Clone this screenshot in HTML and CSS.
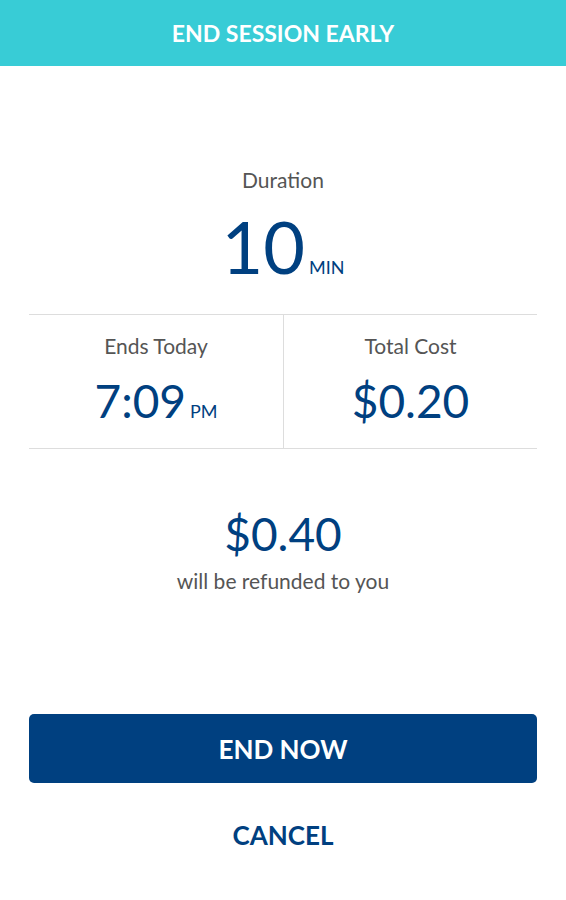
FILE: index.html
```html
<!DOCTYPE html>
<html lang="en">
<head>
    <meta charset="UTF-8">
    <meta name="viewport" content="width=device-width, initial-scale=1.0">
    <title>End Session Early</title>
    <link rel="stylesheet" href="styles.css">
</head>
<body>

<header class="topbar">END SESSION EARLY</header>

<div class="container">
    <div class="duration">
        <div class="label">Duration</div>
        <div class="big-value">10<span class="unit">MIN</span></div>
    </div>

    <div class="stats">
        <div class="stat">
            <div class="label">Ends Today</div>
            <div class="value">7:09<span class="unit">PM</span></div>
        </div>
        <div class="stat">
            <div class="label">Total Cost</div>
            <div class="value">$0.20</div>
        </div>
    </div>

    <div class="refund">
        <div class="value">$0.40</div>
        <div class="label">will be refunded to you</div>
    </div>

    <button class="end-btn">END NOW</button>
    <button class="cancel-btn">CANCEL</button>
</div>

</body>
</html>
```

FILE: styles.css
```css
body {
    font-family: Lato, "Open Sans", sans-serif;
    margin: 0;
    background: white;
    color: rgb(85, 85, 85);
    text-align: center;
}
.topbar {
    height: 66px;
    display: flex;
    align-items: center;
    justify-content: center;
    background: rgb(56, 204, 214);
    color: white;
    font-weight: bold;
    font-size: 23px;
}
.container {
    padding: 0 29px;
}
.label {
    font-size: 21px;
    line-height: 28px;
}
.duration {
    padding-top: 100px;
    padding-bottom: 7px;
}
.big-value {
    font-size: 72px;
    line-height: 80px;
    color: rgb(0, 64, 128);
    margin-top: 12px;
}
.unit {
    font-size: 18px;
    margin-left: 4px;
}
.stats {
    display: grid;
    grid-template-columns: 1fr 1fr;
    border-top: 1px solid rgb(221, 221, 221);
    border-bottom: 1px solid rgb(221, 221, 221);
}
.stat {
    padding: 17px 0 10px;
}
.stat + .stat {
    border-left: 1px solid rgb(221, 221, 221);
}
.value {
    font-size: 46px;
    line-height: 54px;
    color: rgb(0, 64, 128);
    margin-top: 14px;
}
.refund {
    padding-top: 58px;
}
.refund .value {
    margin-top: 0;
}
.refund .label {
    margin-top: 6px;
}
.end-btn {
    display: block;
    width: 100%;
    height: 69px;
    margin-top: 119px;
    background: rgb(0, 64, 128);
    color: white;
    border: none;
    border-radius: 5px;
    font-family: inherit;
    font-weight: bold;
    font-size: 26px;
    cursor: pointer;
}
.cancel-btn {
    display: block;
    margin: 35px auto 0;
    background: none;
    border: none;
    color: rgb(0, 64, 128);
    font-family: inherit;
    font-weight: bold;
    font-size: 26px;
    cursor: pointer;
}
```
